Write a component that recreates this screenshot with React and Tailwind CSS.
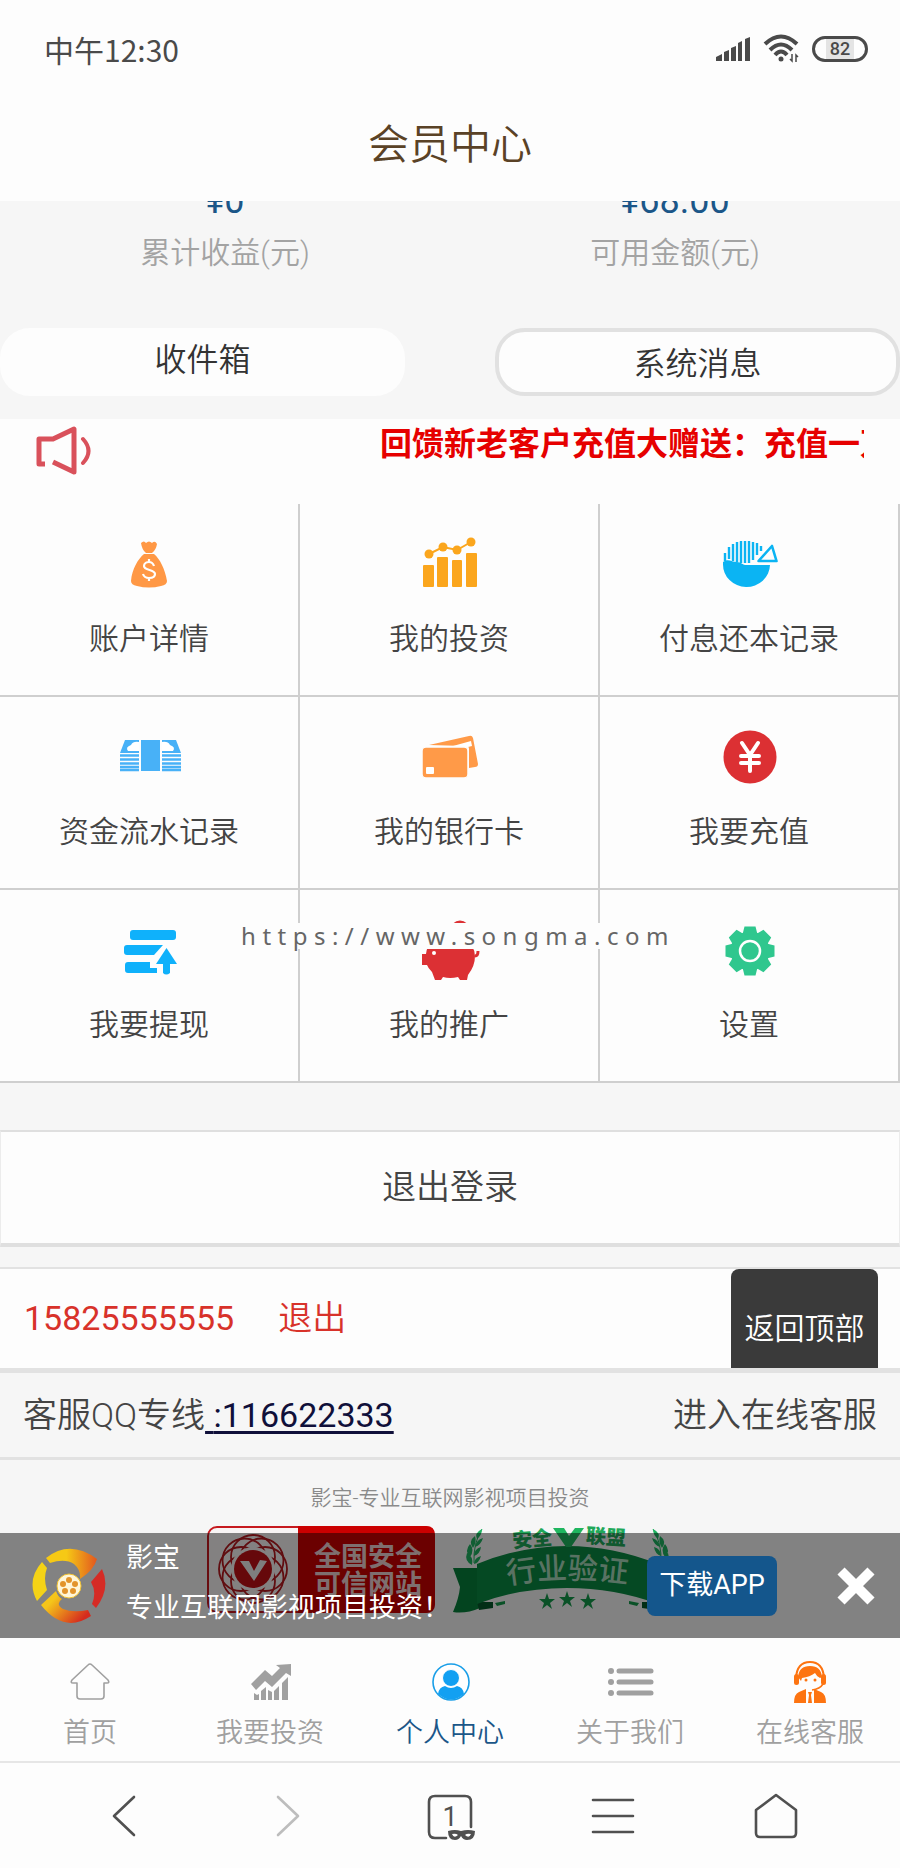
const MENU = [
  { label: '账户详情', icon: MoneyBag },
  { label: '我的投资', icon: BarTrend },
  { label: '付息还本记录', icon: PieIcon },
  { label: '资金流水记录', icon: Banknotes },
  { label: '我的银行卡', icon: BankCards },
  { label: '我要充值', icon: YuanCoin },
  { label: '我要提现', icon: Withdraw },
  { label: '我的推广', icon: PiggyBank },
  { label: '设置', icon: Gear },
];

const TABS = [
  { label: '首页', icon: TabHome },
  { label: '我要投资', icon: TabInvest },
  { label: '个人中心', icon: TabUser, active: true },
  { label: '关于我们', icon: TabList },
  { label: '在线客服', icon: TabAgent },
];

const MENU_SVG = { width: 60, height: 60, viewBox: '0 0 60 60', overflow: 'visible', 'aria-hidden': true };
const TAB_SVG = { width: 40, height: 40, viewBox: '0 0 40 40', overflow: 'visible', 'aria-hidden': true };
const NAV_SVG = {
  width: 44,
  height: 44,
  viewBox: '0 0 44 44',
  fill: 'none',
  stroke: '#505050',
  strokeWidth: 2.6,
  strokeLinecap: 'round',
  strokeLinejoin: 'round',
  overflow: 'visible',
  'aria-hidden': true,
};

/* ---------- menu icons ---------- */

function MoneyBag() {
  return (
    <svg {...MENU_SVG}>
      <g fill="#ff9845">
        <path d="M22 9q3-3 5 0q3-3 6 0q3-3 5 1q-1 6-5 9h-6q-4-3-5-10z" />
        <path d="M25 20h10c6 5 11 15 13 27q0 4-6 5q-12 3-24 0q-6-1-6-5c1-12 7-22 13-27z" />
      </g>
      <path
        d="M35 32c-1-3-3-4-5-4s-5 1-5 4c0 5 11 3 11 8c0 3-3 4-6 4s-5-1-6-4M30 25v3M30 44v3"
        fill="none"
        stroke="#fff"
        strokeWidth="2.2"
      />
    </svg>
  );
}

function BarTrend() {
  return (
    <svg {...MENU_SVG} fill="#fba61d">
      <rect x="4" y="31" width="11" height="22" rx="1" />
      <rect x="18" y="23" width="11" height="30" rx="1" />
      <rect x="33" y="26" width="10" height="27" rx="1" />
      <rect x="47" y="19" width="11" height="34" rx="1" />
      <path d="M10 20L24 13L38 16L52 8" fill="none" stroke="#fba61d" strokeWidth="2" />
      <circle cx="10" cy="20" r="4.5" />
      <circle cx="24" cy="13" r="4.5" />
      <circle cx="38" cy="16" r="4.5" />
      <circle cx="52" cy="8" r="4.5" />
    </svg>
  );
}

function PieIcon() {
  return (
    <svg {...MENU_SVG} fill="#0bb4f3">
      <path d="M4 28c5-4 9 0 14 0c4 0 6 3 8 3h25A23.5 22.5 0 0 1 4 30z" />
      <path
        d="M6 19v8M10 13v12M14 10v17M18 8v20M22 7v22M26 7v22M30 7v22M34 8v18M38 9v12M42 12v5"
        stroke="#0bb4f3"
        strokeWidth="2.4"
      />
      <path d="M53 12L57.5 27H39.5z" fill="none" stroke="#0bb4f3" strokeWidth="2.6" strokeLinejoin="round" />
    </svg>
  );
}

function Banknotes() {
  return (
    <svg {...MENU_SVG} fill="#48b1f7">
      <path d="M6 13h14v13H1z" />
      <path d="M57 13H43v13h19z" />
      <path d="M20 15v9H9q-3-4 3-6q2-4 8-3zM43 15v9h11q3-4-3-6q-2-4-8-3z" fill="#fff" />
      <rect x="22" y="13" width="19" height="31" />
      <path
        d="M1 28.5h19M1 32.5h19M1 36.5h19M1 40h19M1 43h19M43 28.5h19M43 32.5h19M43 36.5h19M43 40h19M43 43h19"
        stroke="#48b1f7"
        strokeWidth="2.4"
      />
    </svg>
  );
}

function BankCards() {
  return (
    <svg {...MENU_SVG} fill="#ff9a48">
      <path d="M10 18L50 9q3-1 4 2l5 26q0 3-3 3l-6 1V22q0-3-3-3z" />
      <path d="M34 19l18-5l1 5l-4 1z" fill="#fff" />
      <rect x="3" y="20" width="46" height="31" rx="4" stroke="#fdfdfd" strokeWidth="1.5" />
      <rect x="7" y="40" width="8" height="7" rx="1" fill="#fff" />
    </svg>
  );
}

function YuanCoin() {
  return (
    <svg {...MENU_SVG}>
      <circle cx="31" cy="30" r="26.5" fill="#dc3033" />
      <path d="M23 16l8 12l8-12M31 28v16M22 29h18M22 36h18" fill="none" stroke="#fff" strokeWidth="4" strokeLinecap="round" />
    </svg>
  );
}

function Withdraw() {
  return (
    <svg {...MENU_SVG} fill="#0fb1fb">
      <rect x="11" y="10" width="46" height="10" rx="3" />
      <path d="M8 25h36l-9 10H8q-3 0-3-3v-4q0-3 3-3z" />
      <path d="M9 42h22v6h7v5H9q-3 0-3-3v-5q0-3 3-3z" />
      <path d="M47.5 28L58 44h-7v9q-4 3-7 0v-9h-7z" />
    </svg>
  );
}

function PiggyBank() {
  return (
    <svg {...MENU_SVG} fill="#dc3034">
      <circle cx="41" cy="10" r="8" fill="none" stroke="#dc3034" strokeWidth="3" />
      <path d="M14 20Q30 12 46 20q10 6 10 16q0 10-7 19l-1 5h-7l-2-3q-8 2-15 0l-2 3h-6l-3-8q-4-4-5-7H3V34h4q1-9 7-14z" />
      <circle cx="15" cy="33" r="2" fill="#fff" />
      <path d="M56 36q3 0 3-5" fill="none" stroke="#dc3034" strokeWidth="3" />
    </svg>
  );
}

function Gear() {
  return (
    <svg {...MENU_SVG} fill="#2fc78e">
      <g transform="translate(31 31)">
        <circle r="19.5" />
        {[0, 45, 90, 135, 180, 225, 270, 315].map((deg) => (
          <path key={deg} d="M-5.5-24.500h11l2 8h-15z" transform={`rotate(${deg})`} />
        ))}
        <circle r="10" fill="none" stroke="#fff" strokeWidth="2.5" />
      </g>
    </svg>
  );
}

/* ---------- tab bar icons ---------- */

function TabHome() {
  return (
    <svg {...TAB_SVG} fill="none" stroke="#a0a0a0" strokeWidth="1.6" strokeLinejoin="round">
      <path d="M20 2q1 0 2 1l16 15q2 3-1 3h-3v13q0 3-3 3H10q-3 0-3-3V21H3q-3 0-1-3L18 3q1-1 2-1z" />
    </svg>
  );
}

function TabInvest() {
  return (
    <svg {...TAB_SVG} fill="#a0a0a0">
      <path d="M1 22L15 8l7 6l8-8l-4-3l15-1v12l-5-3l-14 14l-7-6L6 28z" />
      <path d="M4 31l3 2l2-1v6H4zM11 29l5-4v13h-5zM18 28l4 2v8h-4zM24 29l5-5v14h-5zM32 21l6-6v23h-6z" />
    </svg>
  );
}

function TabUser() {
  return (
    <svg {...TAB_SVG}>
      <circle cx="21" cy="20" r="18" fill="#fff" stroke="#1a9fe8" strokeWidth="1.6" />
      <path d="M8 32q1-7 7-8q6 4 12 0q6 1 7 8q-13 11-26 0z" fill="#12a0f2" />
      <circle cx="21" cy="16" r="8.5" fill="#12a0f2" stroke="#fff" strokeWidth="1" />
    </svg>
  );
}

function TabList() {
  return (
    <svg {...TAB_SVG} fill="#a0a0a0" stroke="#a0a0a0">
      {[9, 20, 31].map((y) => (
        <g key={y}>
          <circle cx="1" cy={y} r="3" stroke="none" />
          <path d={`M9 ${y}h32`} strokeWidth="5" strokeLinecap="round" />
        </g>
      ))}
    </svg>
  );
}

function TabAgent() {
  return (
    <svg {...TAB_SVG} fill="#fd7411">
      <path d="M6 16Q7 0 20 0t14 16" fill="none" stroke="#fd7411" strokeWidth="2" />
      <path d="M8 15Q9 4 20 4t12 11l-2 1q-3-1-5-5q-5 4-13 5l-1 3z" />
      <rect x="4" y="12" width="5" height="11" rx="2.5" />
      <rect x="31" y="12" width="5" height="11" rx="2.5" />
      <path d="M33 22q-3 5-11 6" fill="none" stroke="#fd7411" strokeWidth="1.5" />
      <circle cx="16" cy="18" r="1.5" />
      <circle cx="25" cy="18" r="1.5" />
      <path d="M4 41q0-9 5-11l7-3v14zM36 41q0-9-5-11l-7-3v14zM18 30h4l-1 3l1 8h-4l1-8z" />
    </svg>
  );
}

/* ---------- badges and logo ---------- */

function TrustBadge() {
  return (
    <svg width="228" height="87" viewBox="0 0 228 87" role="img" aria-label="全国安全可信网站">
      <rect x="1" y="1" width="226" height="85" rx="9" fill="#f8f4f4" stroke="#c61a1f" strokeWidth="2" />
      <path d="M91 0h128q9 0 9 9v69q0 9-9 9H91z" fill="#cb0000" />
      <g transform="translate(46 43)" fill="none" stroke="#b5191f" strokeWidth="1.8">
        {[0, 45, 90, 135, 180, 225, 270, 315].map((deg) => (
          <circle key={deg} cy="-12" r="22" transform={`rotate(${deg})`} />
        ))}
        <circle r="22" fill="#f8f4f4" stroke="none" />
        <circle r="19" fill="#c01016" stroke="none" />
        <path d="M-13-8h9l5 10l6-11l7 1l-13 20z" fill="#eee" stroke="none" />
      </g>
      <g fill="#efd2d2" fontSize="27" fontWeight="700" fontFamily='"Noto Sans CJK SC", sans-serif'>
        <text x="107" y="40">全国安全</text>
        <text x="107" y="68">可信网站</text>
      </g>
    </svg>
  );
}

function Laurel() {
  return (
    <g fill="#1fb160">
      <path d="M43 3q-9 14-8 34" fill="none" stroke="#1fb160" strokeWidth="1" />
      <path d="M43 3q-8 4-5 10q5-4 5-10zM36 10q-7 5-2 12q4-6 2-12zM31 18q-6 7 0 13q5-7 0-13zM28 27q-3 8 5 12q2-8-5-12zM44 12q-2 7-8 9q1-7 8-9zM42 21q-1 7-7 9q0-7 7-9zM42 30q-2 7-7 8q0-6 7-8z" />
    </g>
  );
}

function IndustryBadge() {
  return (
    <svg width="254" height="87" viewBox="0 0 254 87" role="img" aria-label="安全联盟行业验证">
      <Laurel />
      <g transform="translate(257 0) scale(-1 1)">
        <Laurel />
      </g>
      <path d="M14 42h27v40q-14 6-27 4q6-14 7-25zM243 42h-27v40q14 6 27 4q-6-14-7-25z" fill="#07803b" />
      <path d="M38 76h16v6l-14 2zM219 76h-16v6l14 2z" fill="#04582a" />
      <path d="M38 38Q82 20 128 20t91 18v40Q176 62 128 62T38 78z" fill="#0a8a42" />
      <path d="M114 2h11l5 8l6-8h9l-13 19h-5z" fill="#1fb65f" />
      <g fill="#20a859" fontSize="20" fontWeight="900" fontFamily='"Noto Sans CJK SC", sans-serif'>
        <text x="73" y="20" transform="rotate(-5 93 10)">安全</text>
        <text x="147" y="18" transform="rotate(4 167 10)">联盟</text>
      </g>
      <path id="ribbon-line" d="M66 59Q128 47 198 59" fill="none" />
      <text fill="#a9d8bb" fontSize="30" fontWeight="500" fontFamily='"Noto Sans CJK SC", sans-serif'>
        <textPath href="#ribbon-line" startOffset="3">行业验证</textPath>
      </text>
      <g fill="#139a4a">
        {[[108, 75], [128, 73], [149, 75]].map(([x, y]) => (
          <path key={x} d="M0-8l2 6h6l-5 4l2 6l-5-4l-5 4l2-6l-5-4h6z" transform={`translate(${x} ${y})`} />
        ))}
        <path d="M56 77l10-2v3l-8 2zM200 77l-10-2v3l8 2z" />
      </g>
    </svg>
  );
}

function ReelLogo() {
  return (
    <svg className="shrink-0" width="74" height="76" viewBox="0 0 74 76" aria-hidden="true">
      <defs>
        <linearGradient id="reel-top" x1="0" y1="0" x2="1" y2="0">
          <stop offset="0.4" stopColor="#f6c915" />
          <stop offset="1" stopColor="#e2571f" />
        </linearGradient>
        <linearGradient id="reel-bottom" x1="0" y1="0" x2="1" y2="0.6">
          <stop offset="0.3" stopColor="#f5c51a" />
          <stop offset="1" stopColor="#d52b1e" />
        </linearGradient>
      </defs>
      <path d="M14 10Q38-9 65 11Q62 22 48 31Q49 22 42 16Q33 10 18 15z" fill="url(#reel-top)" />
      <path d="M10 14l5 6q-4 10 0 22L5 53Q-6 32 10 14z" fill="#f5d316" />
      <path d="M70 21q9 19-6 39l-4-4q5-12-1-22z" fill="#d52b25" />
      <path d="M9 57L24 43q2 6 6 8q-7 5 1 10q10 4 25 1l3 6Q32 86 9 57z" fill="url(#reel-bottom)" />
      <circle cx="37" cy="38" r="12" fill="#fff6d8" stroke="#f0c030" strokeWidth="1" />
      <g fill="#e3942b">
        <circle cx="37" cy="32" r="3" />
        <circle cx="43" cy="36" r="3" />
        <circle cx="41" cy="43" r="3" />
        <circle cx="33" cy="43" r="3" />
        <circle cx="31" cy="36" r="3" />
      </g>
    </svg>
  );
}

/* ---------- page sections ---------- */

function StatusBar() {
  return (
    <div className="flex h-[98px] items-center justify-between pr-8 pl-11 text-[#4a4a4a]">
      <span className="text-[30px] leading-10 font-['Noto_Sans_CJK_SC',sans-serif]">中午12:30</span>
      <div className="flex items-center gap-3">
        <svg width="36" height="26" viewBox="0 0 36 26" fill="#4a4a4a" aria-hidden="true">
          <path d="M1 21l6-3v7H1zM9 16l5-2v11H9zM16 12l5-2v15h-5zM23 7l4-2v20h-4zM30 3l5-2v24h-5z" />
        </svg>
        <svg width="37" height="30" viewBox="0 0 37 30" fill="none" stroke="#4a4a4a" strokeWidth="4" aria-hidden="true">
          <path d="M2 10Q18-5 34 10M7 16Q18 5 29 16M12 21Q18 14 24 21" />
          <circle cx="18" cy="25" r="2.5" fill="#4a4a4a" stroke="none" />
          <path d="M29 20v7l-2-2M33 28v-7l2 2" strokeWidth="1.5" />
        </svg>
        <div className="flex h-[26px] w-14 items-center justify-center rounded-full border-[3px] border-[#4a4a4a]">
          <span className="bg-[#e4e4e4] px-1 text-lg leading-5 font-medium font-[Roboto,sans-serif]">82</span>
        </div>
      </div>
    </div>
  );
}

function Stat({ value, label }) {
  return (
    <div className="text-center">
      <div className="text-[36px] leading-10 text-[#1b5688]">{value}</div>
      <div className="mt-3 text-[30px] leading-10 font-[350] text-[#a3a3a3]">{label}</div>
    </div>
  );
}

function TabBar() {
  return (
    <nav className="grid grid-cols-5 border-b-2 border-[#e6e6e6] bg-[#fdfdfd] pt-6 pb-2">
      {TABS.map(({ label, icon: Icon, active }) => (
        <a
          key={label}
          href="#"
          className={`flex flex-col items-center gap-3 text-[27px] leading-[39px] font-[350] ${
            active ? 'text-[#1b5688]' : 'text-[#a0a0a0]'
          }`}
        >
          <Icon />
          {label}
        </a>
      ))}
    </nav>
  );
}

function BrowserBar() {
  return (
    <nav className="grid h-[105px] grid-cols-5 items-center justify-items-center bg-[#fdfdfd] px-[42px]">
      <button type="button" aria-label="后退">
        <svg {...NAV_SVG}>
          <path d="M32 3L12 22L32 41" />
        </svg>
      </button>
      <button type="button" aria-label="前进">
        <svg {...NAV_SVG} stroke="#bdbdbd">
          <path d="M13 3L33 22L13 41" />
        </svg>
      </button>
      <button type="button" aria-label="窗口" className="relative">
        <svg {...NAV_SVG}>
          <path d="M18 44H7q-6 0-6-6V8q0-6 6-6h30q6 0 6 6v25" />
          <path d="M20 37q7-2 13 0q7-2 14 0q0 9-8 9q-4 0-6-4q-2 4-6 4q-7 0-7-9z" fill="#505050" stroke="none" />
          <path d="M24 40q4-1 6 1q-4 4-6-1zM43 40q-4-1-6 1q4 4 6-1z" fill="#fff" stroke="none" />
        </svg>
        <span className="absolute inset-0 text-center text-[27px] leading-[46px] text-[#505050]">1</span>
      </button>
      <button type="button" aria-label="菜单">
        <svg {...NAV_SVG}>
          <path d="M2 6h40M2 22h40M2 38h40" />
        </svg>
      </button>
      <button type="button" aria-label="主页">
        <svg {...NAV_SVG}>
          <path d="M22 1L42 16v23q0 4-4 4H6q-4 0-4-4V16z" />
        </svg>
      </button>
    </nav>
  );
}

export default function App() {
  return (
    <div className="bg-[#f6f6f6] font-[Roboto,'Noto_Sans_CJK_SC',sans-serif] text-[#444]">
      <header className="bg-[#fdfdfd] pb-[9px]">
        <StatusBar />
        <h1 className="text-center text-[41px] leading-[94px] font-[350] text-[#5a4226]">会员中心</h1>
      </header>

      {/* Account totals, scrolled partly under the header */}
      <section className="overflow-hidden">
        <div className="-mt-5 grid grid-cols-2">
          <Stat value="¥0" label="累计收益(元)" />
          <Stat value="¥68.00" label="可用金额(元)" />
        </div>
        <div className="mt-[55px] mb-[23px] flex justify-between text-[32px] font-[350] text-[#333]">
          <button type="button" className="h-[68px] w-[45%] rounded-[30px] bg-[#fdfdfd] pb-1">
            收件箱
          </button>
          <button type="button" className="h-[68px] w-[45%] rounded-[30px] border-4 border-[#e1e1e1] bg-[#fdfdfd] pt-1">
            系统消息
          </button>
        </div>
      </section>

      {/* Notice */}
      <div className="flex h-[85px] items-start bg-[#fdfdfd] px-9">
        <svg className="mt-[7px]" width="58" height="50" viewBox="0 0 58 50" fill="none" stroke="#d9515b" strokeWidth="5" strokeLinejoin="round" aria-hidden="true">
          <path d="M9 38H3V13h14L38 3v43L17 36" />
          <path d="M47 13q11 12 0 24" strokeWidth="4" strokeLinecap="round" />
        </svg>
        <div className="ml-auto w-[484px] overflow-hidden text-[32px] leading-[50px] font-bold whitespace-nowrap text-[#e60000]">
          回馈新老客户充值大赠送：充值一万
        </div>
      </div>

      {/* Menu grid */}
      <div className="relative bg-[#fdfdfd]">
        <div className="grid grid-cols-3">
          {MENU.map(({ label, icon: Icon }) => (
            <a
              key={label}
              href="#"
              className="flex flex-col items-center gap-6 border-r-2 border-b-2 border-[#cfcfcf] pt-[30px] pb-[35px] text-[30px] leading-[42px] font-[350] text-[#444]"
            >
              <Icon />
              {label}
            </a>
          ))}
        </div>
        <div className="absolute inset-x-0 top-[419px] flex justify-center pl-3">
          <span className="bg-[#fdfdfd] pl-1 text-2xl leading-[26px] tracking-[0.27em] text-[#666] font-['Noto_Sans',sans-serif]">
            https://www.songma.com
          </span>
        </div>
      </div>

      <button
        type="button"
        className="mt-[47px] mb-5 block h-[117px] w-full border-x border-t-2 border-b-4 border-[#dfdfdf] border-x-[#ececec] bg-[#fdfdfd] text-[34px] font-[350]"
      >
        退出登录
      </button>

      <div className="flex h-[106px] justify-between border-t-2 border-b-[5px] border-[#e2e2e2] bg-[#fdfdfd] pr-[22px] pl-6 text-[34px] text-[#d8322a]">
        <div className="flex items-center gap-11">
          <span>15825555555</span>
          <a href="#" className="font-[350]">退出</a>
        </div>
        <button type="button" className="w-[147px] rounded-t-lg bg-[#3a3a3a] pt-5 text-[30px] font-[350] text-white">
          返回顶部
        </button>
      </div>

      <div className="flex h-[87px] items-center justify-between border-b-[3px] border-[#e2e2e2] px-[23px] text-[34px] font-[350]">
        <span>
          客服QQ专线
          <a href="#" className="font-normal text-[#10103a] underline underline-offset-4">
            {' '}:116622333
          </a>
        </span>
        <a href="#">进入在线客服</a>
      </div>

      <footer className="relative pt-5 pb-[25px]">
        <p className="text-center text-[21px] leading-9 font-[350] text-[#8a8a8a]">影宝-专业互联网影视项目投资</p>
        <div className="mt-[10px] flex justify-center gap-1">
          <TrustBadge />
          <IndustryBadge />
        </div>

        {/* App download strip floating over the badges */}
        <div className="absolute inset-x-0 bottom-0 flex h-[105px] items-center bg-black/47 pr-[25px] pl-8 text-[27px] text-white">
          <ReelLogo />
          <div className="ml-5 self-start leading-[50px] whitespace-nowrap">
            <div>影宝</div>
            <div>专业互联网影视项目投资！</div>
          </div>
          <button type="button" className="mr-[60px] ml-auto h-[60px] w-[130px] shrink-0 rounded-lg bg-[#14568c] whitespace-nowrap">
            下载APP
          </button>
          <button type="button" aria-label="关闭" className="shrink-0">
            <svg width="38" height="38" viewBox="0 0 38 38" stroke="#fff" strokeWidth="10" aria-hidden="true">
              <path d="M4 4L34 34M34 4L4 34" />
            </svg>
          </button>
        </div>
      </footer>

      <TabBar />
      <BrowserBar />
    </div>
  );
}
